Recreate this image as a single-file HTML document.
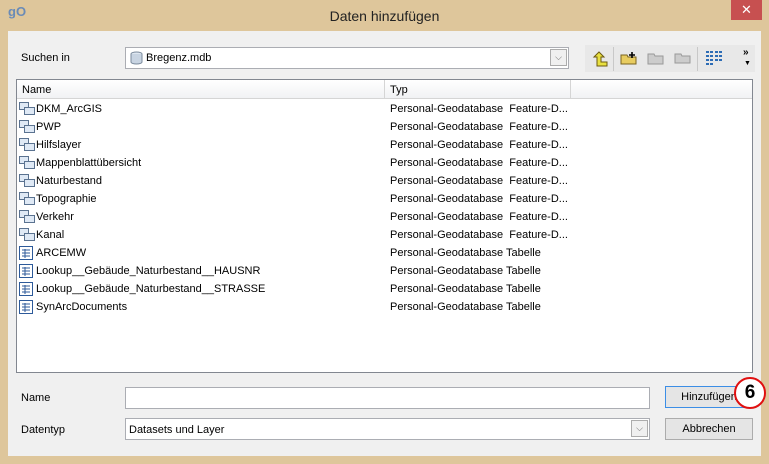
<!DOCTYPE html><html><head><style>
body{margin:0;width:769px;height:464px;background:#dec69b;font:11px "Liberation Sans",sans-serif;color:#000;position:relative;overflow:hidden}
.a{position:absolute}
.in{left:8px;top:31px;width:753px;height:425px;background:#f0f0f0}
.title{left:0;top:8px;width:769px;text-align:center;font-size:14px;color:#222}
.close{left:731px;top:0;width:31px;height:20px;background:#c75050;color:#fff;text-align:center;font-size:13px;line-height:20px}
.box{background:#fff;border:1px solid #abadb3}
.list{left:16px;top:79px;width:735px;height:292px;background:#fff;border:1px solid #828790}
.hdr{left:0;top:0;width:735px;height:18px;background:linear-gradient(#fff,#f1f2f4);border-bottom:1px solid #d5d5d5}
.hdr span{position:absolute;top:4px}
.sep{position:absolute;top:0;width:1px;height:18px;background:#d5d5d5}
.row{position:absolute;left:0;height:18px;line-height:18px;width:735px}
.row .n{position:absolute;left:19px;top:1px}
.row .t{position:absolute;left:373px;top:1px}
.ic{position:absolute;left:2px;top:3px}
.btn{background:#e5e5e5;border:1px solid #acacac;text-align:center;line-height:21px}
.dd{position:absolute;right:1px;top:1px;width:17px;height:17px;border:1px solid #acacac;background:#f0f0f0;box-sizing:border-box;text-align:center;color:#666;font-size:9px;line-height:15px}
</style></head><body>
<div class="a" style="left:8px;top:4px;width:18px;height:16px;color:#6a8bb7;font-weight:bold;font-size:13px">gO</div>
<div class="a title">Daten hinzufügen</div>
<div class="a close">✕</div>
<div class="a in"></div>
<div class="a" style="left:21px;top:52px">Suchen in</div>
<div class="a box" style="left:125px;top:47px;width:442px;height:20px">
<svg class="a" style="left:4px;top:3px" width="13" height="14"><ellipse cx="6.5" cy="3" rx="5.5" ry="2" fill="#dde6f0" stroke="#7a8a9c"/><path d="M1 3v8a5.5 2 0 0 0 11 0V3" fill="#c8d4e2" stroke="#7a8a9c"/></svg>
<span class="a" style="left:20px;top:4px">Bregenz.mdb</span><div class="dd">⌵</div></div>
<div class="a" style="left:585px;top:45px;width:170px;height:27px;background:#e8e8e8"></div>
<svg class="a" style="left:590px;top:49px" width="20" height="20"><path d="M4 8l5-5 5 5h-3v5h6v4H7V8z" fill="#e8e040" stroke="#6b5a10"/></svg>
<div class="a" style="left:613px;top:47px;width:1px;height:24px;background:#c8c8c8"></div>
<svg class="a" style="left:620px;top:51px" width="18" height="14"><path d="M1 4h6l1 2h8v7H1z" fill="#e8cc60" stroke="#7a6420"/><path d="M12 1v6M9 4h6" stroke="#000" stroke-width="1.6"/></svg>
<svg class="a" style="left:647px;top:52px" width="18" height="13"><path d="M1 2h6l1 2h8v8H1z" fill="#ccc" stroke="#999"/></svg>
<svg class="a" style="left:674px;top:50px" width="18" height="14"><path d="M1 4h6l1 2h8v7H1z" fill="#ccc" stroke="#999"/></svg>
<div class="a" style="left:697px;top:47px;width:1px;height:24px;background:#c8c8c8"></div>
<svg class="a" style="left:706px;top:51px" width="16" height="14"><g fill="#2d6cb5"><rect x="0" y="0" width="3" height="2"/><rect x="4" y="0" width="3" height="2"/><rect x="9" y="0" width="3" height="2"/><rect x="13" y="0" width="3" height="2"/><rect x="0" y="4" width="3" height="2"/><rect x="4" y="4" width="3" height="2"/><rect x="9" y="4" width="3" height="2"/><rect x="13" y="4" width="3" height="2"/><rect x="0" y="8" width="3" height="2"/><rect x="4" y="8" width="3" height="2"/><rect x="9" y="8" width="3" height="2"/><rect x="13" y="8" width="3" height="2"/><rect x="0" y="12" width="3" height="2"/><rect x="4" y="12" width="3" height="2"/></g></svg>
<div class="a" style="left:743px;top:47px;font-size:10px;font-weight:bold">»</div>
<div class="a" style="left:744px;top:60px;font-size:7px">▼</div>
<div class="a list">
<div class="a hdr"><span style="left:5px">Name</span><div class="sep" style="left:367px"></div><span style="left:373px">Typ</span><div class="sep" style="left:553px"></div></div>
<div id="rows"></div>
</div>
<div class="a" style="left:21px;top:392px">Name</div>
<div class="a box" style="left:125px;top:387px;width:523px;height:20px"></div>
<div class="a" style="left:21px;top:424px">Datentyp</div>
<div class="a box" style="left:125px;top:418px;width:523px;height:20px"><span class="a" style="left:3px;top:5px">Datasets und Layer</span><div class="dd">⌵</div></div>
<div class="a btn" style="left:665px;top:386px;width:86px;height:20px;border-color:#3c8ee6">Hinzufügen</div>
<div class="a btn" style="left:665px;top:418px;width:86px;height:20px">Abbrechen</div>
<div class="a" style="left:734px;top:377px;width:32px;height:32px;border-radius:50%;background:#fff;border:2px solid #e01010;box-sizing:border-box;text-align:center;font-size:19px;font-weight:bold;line-height:28px">6</div>
<script>
var f=["DKM_ArcGIS","PWP","Hilfslayer","Mappenblattübersicht","Naturbestand","Topographie","Verkehr","Kanal"],t=["ARCEMW","Lookup__Gebäude_Naturbestand__HAUSNR","Lookup__Gebäude_Naturbestand__STRASSE","SynArcDocuments"],h="";
var fi='<svg class="ic" width="16" height="14"><rect x="0.5" y="0.5" width="9" height="7" fill="#dfe9f5" stroke="#5a7290"/><rect x="5.5" y="5.5" width="10" height="7" fill="#dfe9f5" stroke="#5a7290"/></svg>';
var ti='<svg class="ic" width="14" height="14"><rect x="0.5" y="0.5" width="13" height="13" fill="#fff" stroke="#2d5a9a"/><path d="M3 4h8M3 7h8M3 10h8M6 3v9" stroke="#2d5a9a"/></svg>';
var y=19;f.forEach(function(n){h+='<div class="row" style="top:'+y+'px">'+fi+'<span class="n">'+n+'</span><span class="t">Personal-Geodatabase&nbsp; Feature-D...</span></div>';y+=18});
t.forEach(function(n){h+='<div class="row" style="top:'+y+'px">'+ti+'<span class="n">'+n+'</span><span class="t">Personal-Geodatabase Tabelle</span></div>';y+=18});
document.getElementById("rows").innerHTML=h;
</script>
</body></html>
